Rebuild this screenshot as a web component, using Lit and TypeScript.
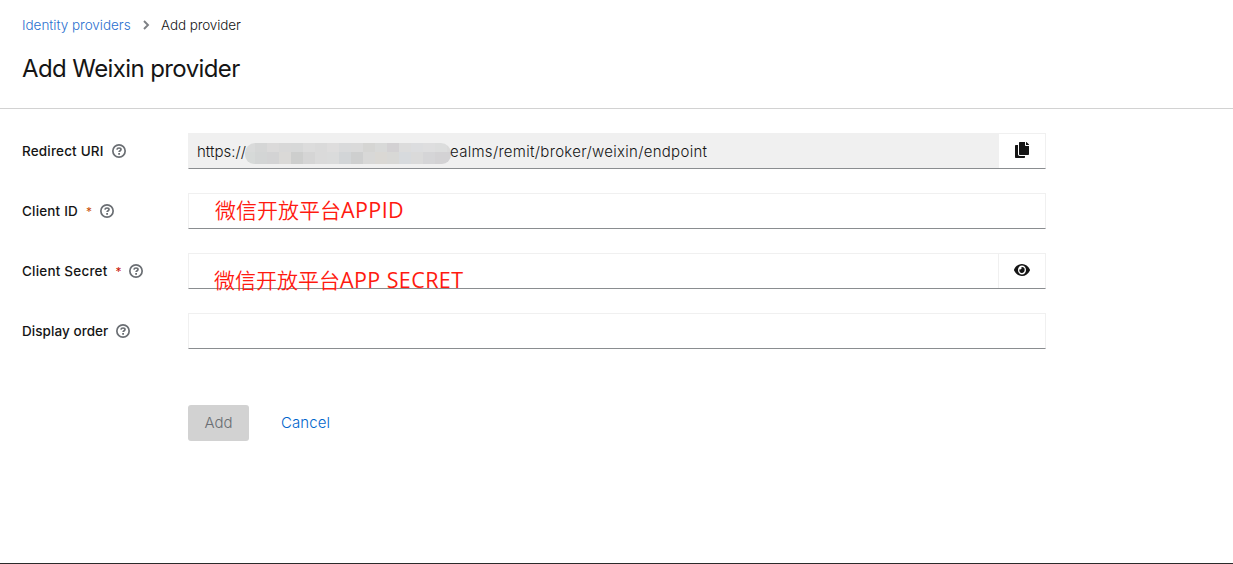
import { LitElement, html, css, svg, nothing } from "lit";
import { customElement } from "lit/decorators.js";

const copyIcon = html`<svg width="14" height="16" viewBox="0 0 448 512" fill="#151515"><path d="M320 448v40c0 13.255-10.745 24-24 24H24c-13.255 0-24-10.745-24-24V120c0-13.255 10.745-24 24-24h72v296c0 30.879 25.121 56 56 56h168zm0-344V0H152c-13.255 0-24 10.745-24 24v368c0 13.255 10.745 24 24 24h272c13.255 0 24-10.745 24-24V128H344c-13.2 0-24-10.8-24-24zm120.971-31.029L375.029 7.029A24 24 0 0 0 358.059 0H352v96h96v-6.059a24 24 0 0 0-7.029-16.97z"/></svg>`;

const eyeIcon = html`<svg width="16" height="16" viewBox="0 0 576 512" preserveAspectRatio="none" fill="#151515"><path d="M572.52 241.4C518.29 135.59 410.93 64 288 64S57.68 135.64 3.48 241.41a32.35 32.35 0 0 0 0 29.19C57.71 376.41 165.07 448 288 448s230.32-71.64 284.52-177.41a32.35 32.35 0 0 0 0-29.19zM288 400a144 144 0 1 1 144-144 143.93 143.93 0 0 1-144 144zm0-240a95.31 95.31 0 0 0-25.31 3.79 47.85 47.85 0 0 1-66.9 66.9A95.78 95.78 0 1 0 288 160z"/></svg>`;

const helpIcon = html`<svg class="help" width="14" height="14" viewBox="0 0 14 14" fill="none" stroke="#6a6e73"><circle cx="7" cy="7" r="6.15" stroke-width="1.7"/><path d="M4.9 5.6C5.1 4.5 5.9 4 7 4c1.2 0 2 .6 2 1.5C9 6.700 7.100 6.700 7.100 8.100" stroke-width="1.7"/><path d="M6.200 9.900h1.800" stroke-width="1.700"/></svg>`;

// Two rows of blocks that hide the host name in the redirect address.
const maskTop = ["#d9dada", "#d5d6d6", "#dbdada", "#d8d8d8", "#d7d8d8", "#dcdcdc", "#dadada", "#dedddd", "#d9dadb", "#dadada", "#d5d5d3", "#d8d9d8", "#d3d1d3", "#dcdcdc", "#dcdddf", "#dededf", "#dcdddd", "#dadada"];
const maskBottom = ["#d6d9d8", "#d3d5d5", "#d3d3d4", "#dad9d7", "#cdcecd", "#d5d5d5", "#dadada", "#dadbdb", "#d2d5d7", "#cecfcf", "#d8d8d7", "#dad8d4", "#d8d8d6", "#d7dadd", "#dadada", "#d5d5d7", "#d3d2d4", "#d3d2d4"];
const blocks = (colors: string[], y: number, h: number) =>
  colors.map((c, i) => svg`<rect x=${i * 12 - 2} y=${y} width="12" height=${h} fill=${c}/>`);
const mask = html`<svg class="mask" width="206" height="21" viewBox="0 0 206 21" shape-rendering="crispEdges">${blocks(maskTop, 0, 9)}${blocks(maskBottom, 9, 12)}</svg>`;

@customElement("app-root")
export class AppRoot extends LitElement {
  static styles = css`
    :host { display: block; height: 564px; box-sizing: border-box; background: #fff; color: #151515; border-bottom: 1px solid #2b2b2b; font-family: Inter, "Noto Sans", sans-serif; font-size: 14px; overflow: hidden; }
    * { box-sizing: border-box; }
    svg { display: block; flex: none; }
    header { height: 109px; border-bottom: 1px solid #d2d2d2; padding: 15px 22px 0; }
    nav { display: flex; align-items: center; height: 20px; line-height: 20px; white-space: nowrap; font-size: 13.5px; font-weight: 300; }
    nav a { color: #2b70cf; width: 109px; letter-spacing: -0.03px; }
    nav svg { margin: 0 11px; }
    .here { letter-spacing: -0.1px; }
    h1 { margin: 18px 0 0; font-size: 24px; line-height: 32px; font-weight: 400; letter-spacing: -0.6px; white-space: nowrap; }
    form { padding: 24px 0 0 22px; display: flex; flex-direction: column; gap: 24px; }
    .row { display: grid; grid-template-columns: 166px 858px; height: 36px; }
    .label { display: flex; align-items: center; font-weight: 500; font-size: 13.5px; letter-spacing: 0.2px; white-space: nowrap; }
    .label.wide { letter-spacing: 0.17px; }
    .label.tight { letter-spacing: 0.06px; }
    .star { color: #c9190b; margin-left: 8px; font-size: 12px; font-weight: 400; width: 6px; }
    .star.warm { color: #c9500b; }
    .help { margin-left: 8px; }
    .field { position: relative; display: flex; border: 1px solid #f0f0f0; border-bottom-color: #8a8d90; background: #fff; }
    .field.readonly .value { background: #f0f0f0; }
    .value { flex: 1; display: flex; align-items: center; padding-left: 8px; font-weight: 300; font-size: 15px; white-space: nowrap; }
    .tail { width: 47px; border-left: 1px solid #f0f0f0; display: flex; justify-content: center; padding-top: 8px; }
    .scheme { width: 48px; }
    .mask { border-radius: 10px 10px 9px 9px; margin-top: 4px; }
    .path { margin-left: -1px; letter-spacing: 0.3px; }
    .note { position: absolute; left: 26px; top: 0; line-height: 30px; color: #ff1a10; font-family: "Open Sans", "Noto Sans CJK SC", sans-serif; font-size: 21.5px; letter-spacing: 0.4px; white-space: nowrap; }
    .note.low { left: 25px; top: 10px; }
    .cjk { font-family: "Noto Sans CJK SC", sans-serif; font-size: 21px; font-weight: 350; letter-spacing: 0; }
    .actions { display: flex; margin: 32px 0 0 166px; height: 36px; font-size: 15px; font-weight: 300; }
    button { font: inherit; border: 0; padding: 0 0 2px; background: none; }
    .add { width: 61px; background: #d2d2d2; color: #6a6e73; border-radius: 3px; }
    .cancel { color: #0066cc; margin-left: 32px; letter-spacing: 0.1px; }
  `;

  private row(label: string, spacing: string, star: unknown, field: unknown) {
    return html`<div class="row"><div class="label ${spacing}"><span>${label}</span>${star}${helpIcon}</div>${field}</div>`;
  }

  render() {
    return html`
      <header>
        <nav><a>Identity providers</a>
          <svg width="8" height="10" viewBox="0 0 8 10" fill="none" stroke="#7d8084" stroke-width="1.900"><path d="M2 1l4 4-4 4"/></svg>
          <span class="here">Add provider</span></nav>
        <h1>Add Weixin provider</h1>
      </header>
      <form>
        ${this.row("Redirect URI", "wide", nothing, html`<div class="field readonly"><div class="value"><span class="scheme">https://</span>${mask}<span class="path">ealms/remit/broker/weixin/endpoint</span></div><div class="tail">${copyIcon}</div></div>`)}
        ${this.row("Client ID", "wide", html`<span class="star warm">*</span>`, html`<div class="field"><div class="note"><span class="cjk">微信开放平台</span>APPID</div></div>`)}
        ${this.row("Client Secret", "", html`<span class="star">*</span>`, html`<div class="field"><div class="value"></div><div class="tail">${eyeIcon}</div><div class="note low"><span class="cjk">微信开放平台</span>APP SECRET</div></div>`)}
        ${this.row("Display order", "tight", nothing, html`<div class="field"></div>`)}
        <div class="actions"><button class="add" type="button">Add</button><button class="cancel" type="button">Cancel</button></div>
      </form>`;
  }
}
